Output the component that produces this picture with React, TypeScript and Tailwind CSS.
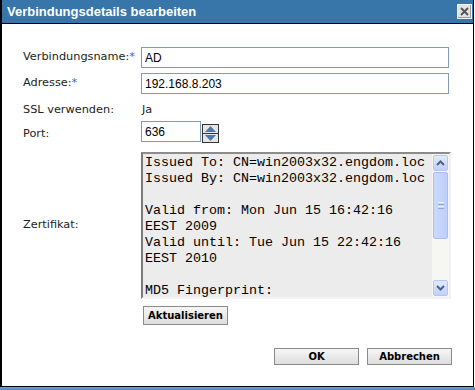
import React from "react";

const certLines = [
  "Issued To: CN=win2003x32.engdom.loc",
  "Issued By: CN=win2003x32.engdom.loc",
  "",
  "Valid from: Mon Jun 15 16:42:16",
  "EEST 2009",
  "Valid until: Tue Jun 15 22:42:16",
  "EEST 2010",
  "",
  "MD5 Fingerprint:",
];

function Chevron({ up }: { up?: boolean }) {
  return (
    <svg width="9" height="6" viewBox="0 0 9 6">
      <path
        d={up ? "M1 5 L4.5 1.5 L8 5" : "M1 1 L4.5 4.5 L8 1"}
        fill="none"
        stroke="#4d6185"
        strokeWidth="2"
      />
    </svg>
  );
}

function Btn({ children, w = "w-[85px]", h = "h-[17px]" }: { children: React.ReactNode; w?: string; h?: string }) {
  return (
    <button
      className={`${w} ${h} flex items-center justify-center border border-[#8a8a8a] bg-gradient-to-b from-[#f6f6f6] to-[#dedede] text-[10px] font-bold text-black font-['DejaVu_Sans',sans-serif] leading-none`}
    >
      {children}
    </button>
  );
}

export default function App() {
  return (
    <div className="w-[475px] h-[390px] bg-white overflow-hidden font-['DejaVu_Sans',sans-serif] text-[11.3px] text-[#222]">
      {/* Dialog */}
      <div className="w-[474px] h-[387px] flex flex-col border-l-2 border-r border-b border-black bg-white">
        {/* Titelleiste */}
        <div className="h-[24px] shrink-0 flex items-center justify-between bg-[#3875a9] border-b border-black pl-[5px] pr-[1px]">
          <span className="text-white font-bold text-[13px] font-['Liberation_Sans',sans-serif] leading-none">
            Verbindungsdetails bearbeiten
          </span>
          <div className="w-[15px] h-[15px] flex items-center justify-center bg-[#e4e4e4] border border-[#f4f4f4] shadow-[inset_-1px_-1px_0_#9a9a9a]">
            <svg width="9" height="9" viewBox="0 0 9 9">
              <path d="M1 1 L8 8 M8 1 L1 8" stroke="#555" strokeWidth="2" />
            </svg>
          </div>
        </div>

        {/* Formular */}
        <div className="flex flex-col pl-[21px] pt-[23px]">
          <div className="flex items-center h-[21px]">
            <div className="w-[118px]">
              Verbindungsname:<span className="text-[#3366cc]">*</span>
            </div>
            <div className="w-[308px] h-[21px] border border-[#7f9db9] flex items-center pl-[3px] text-[12px] text-black font-['Liberation_Sans',sans-serif]">
              AD
            </div>
          </div>
          <div className="flex items-center h-[21px] mt-[5px]">
            <div className="w-[118px]">
              Adresse:<span className="text-[#3366cc]">*</span>
            </div>
            <div className="w-[308px] h-[21px] border border-[#7f9db9] flex items-center pl-[3px] text-[12px] text-black font-['Liberation_Sans',sans-serif]">
              192.168.8.203
            </div>
          </div>
          <div className="flex items-center h-[22px] mt-[5px]">
            <div className="w-[119px]">SSL verwenden:</div>
            <div>Ja</div>
          </div>
          <div className="flex items-center h-[21px]">
            <div className="w-[118px] mt-[6px]">Port:</div>
            <div className="w-[60px] h-[21px] border border-[#7f9db9] flex items-center pl-[3px] text-[12px] text-black font-['Liberation_Sans',sans-serif]">
              636
            </div>
            <div className="ml-[1px] mt-[3px] flex flex-col">
              <div className="w-[17px] h-[10px] flex items-center justify-center bg-[#e6e6e6] border border-[#333]">
                <svg width="11" height="6" viewBox="0 0 11 6">
                  <path d="M0 6 L5.5 0 L11 6 Z" fill="#5078a8" />
                </svg>
              </div>
              <div className="w-[17px] h-[10px] -mt-[1px] flex items-center justify-center bg-[#e6e6e6] border border-[#333]">
                <svg width="11" height="6" viewBox="0 0 11 6">
                  <path d="M0 0 L5.5 6 L11 0 Z" fill="#5078a8" />
                </svg>
              </div>
            </div>
          </div>

          {/* Zertifikat */}
          <div className="flex items-center mt-[10px]">
            <div className="w-[118px]">Zertifikat:</div>
            <div className="w-[310px] h-[147px] flex border-2 border-t-[#8c8c8c] border-l-[#7a7a7a] border-r-[#f0f0f0] border-b-[#f4f4f4] bg-[#ececec]">
              <div className="flex-1 overflow-hidden pl-[2px] pt-[1px] font-['Liberation_Mono',monospace] text-[13.33px] leading-[16px] text-black whitespace-pre">
                {certLines.map((l, i) => (
                  <div key={i} className="h-[16px]">
                    {l}
                  </div>
                ))}
              </div>
              <div className="w-[17px] flex flex-col bg-[#f6f6f2] px-[1px] py-[1px]">
                <div className="h-[16px] flex items-center justify-center rounded-[2px] border border-[#b4c7f3] bg-gradient-to-b from-[#e2ebfe] to-[#bed1fb]">
                  <Chevron up />
                </div>
                <div className="h-[67px] mt-[1px] flex flex-col items-center justify-center gap-[1px] rounded-[2px] border border-[#aabdee] bg-gradient-to-r from-[#cbdafc] to-[#bccffa]">
                  <div className="w-[6px] h-[1px] bg-[#eef3ff]" />
                  <div className="w-[6px] h-[1px] bg-[#8ca4e0]" />
                  <div className="w-[6px] h-[1px] bg-[#eef3ff]" />
                  <div className="w-[6px] h-[1px] bg-[#8ca4e0]" />
                </div>
                <div className="flex-1" />
                <div className="h-[16px] flex items-center justify-center rounded-[2px] border border-[#b4c7f3] bg-gradient-to-b from-[#e2ebfe] to-[#bed1fb]">
                  <Chevron />
                </div>
              </div>
            </div>
          </div>

          <div className="ml-[120px] mt-[7px]">
            <Btn h="h-[19px]">Aktualisieren</Btn>
          </div>
        </div>

        {/* Schaltflächen */}
        <div className="flex justify-end gap-[8px] pr-[21px] mt-[23px]">
          <Btn>OK</Btn>
          <Btn>Abbrechen</Btn>
        </div>
      </div>
      <div className="h-[3px] bg-gradient-to-b from-[#7d9cc9] to-[#5f82b8]" />
    </div>
  );
}
